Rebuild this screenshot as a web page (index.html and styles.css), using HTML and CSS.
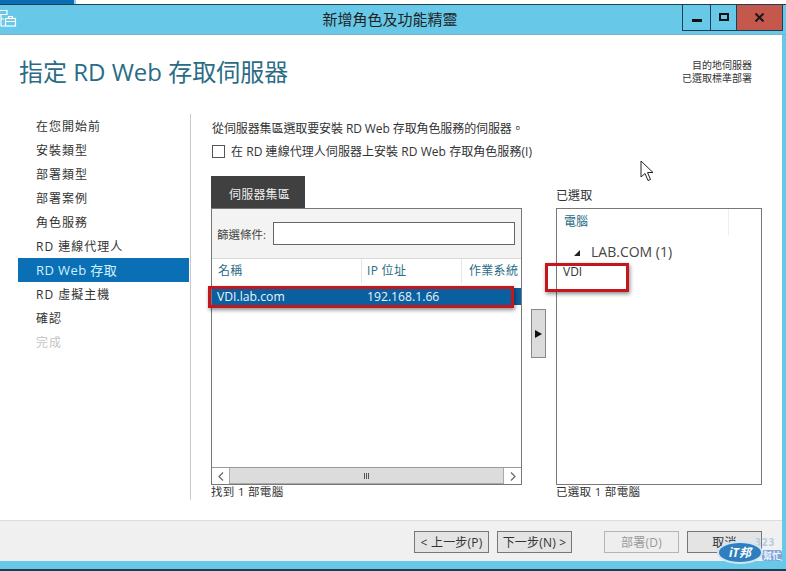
FILE: index.html
```html
<!DOCTYPE html>
<html lang="zh-Hant">
<head>
    <meta charset="UTF-8">
    <meta name="viewport" content="width=device-width, initial-scale=1.0">
    <title>新增角色及功能精靈</title>
    <link rel="stylesheet" href="styles.css">
</head>
<body>
    <div class="topstrip"><div class="taskbit"></div></div>

    <div class="titlebar">
        <svg class="appicon" width="17" height="17" viewBox="0 0 17 17" fill="none" stroke="#fff" stroke-width="1.2">
            <path d="M-1 0.500h8v4h-8M1 4.500v11.500h4M1 9h3"/>
            <rect x="5.500" y="8.500" width="10" height="7.500"/>
            <path d="M8.500 8.500v-2h4v2M5.500 11.500h10"/>
        </svg>
        <div class="wintitle">新增角色及功能精靈</div>
        <div class="winbtns">
            <div class="winbtn minbtn"><span class="minglyph"></span></div>
            <div class="winbtn maxbtn"><span class="maxglyph"></span></div>
            <div class="winbtn closebtn">
                <svg width="9" height="9" viewBox="0 0 9 9" stroke="#1a1a1a" stroke-width="2"><path d="M0.500 0.500l8 8M8.500 0.500l-8 8"/></svg>
            </div>
        </div>
    </div>

    <div class="dialog">
        <div class="head">
            <h1>指定 RD Web 存取伺服器</h1>
            <div class="dest">目的地伺服器<br>已選取標準部署</div>
        </div>

        <div class="main">
            <ul class="nav">
                <li>在您開始前</li>
                <li>安裝類型</li>
                <li>部署類型</li>
                <li>部署案例</li>
                <li>角色服務</li>
                <li>RD 連線代理人</li>
                <li class="active">RD Web 存取</li>
                <li>RD 虛擬主機</li>
                <li>確認</li>
                <li class="off">完成</li>
            </ul>

            <div class="content">
                <p class="intro">從伺服器集區選取要安裝 RD Web 存取角色服務的伺服器。</p>
                <label class="check"><span class="box"></span>在 RD 連線代理人伺服器上安裝 RD Web 存取角色服務(I)</label>

                <div class="columns">
                    <div class="pool">
                        <div class="tab">伺服器集區</div>
                        <div class="panel">
                            <div class="filter">
                                <span>篩選條件:</span>
                                <div class="input"></div>
                            </div>
                            <div class="cols">
                                <div class="col c1">名稱</div>
                                <div class="col c2">IP 位址</div>
                                <div class="col c3">作業系統</div>
                            </div>
                            <div class="row">
                                <span class="c1">VDI.lab.com</span>
                                <span class="c2">192.168.1.66</span>
                            </div>
                            <div class="spacer"></div>
                            <div class="scroll">
                                <div class="sbtn">
                                    <svg width="6" height="9" viewBox="0 0 6 9" fill="none" stroke="#666" stroke-width="1.200"><path d="M5 0.500l-4 4 4 4"/></svg>
                                </div>
                                <div class="thumb"><span></span><span></span><span></span></div>
                                <div class="sbtn">
                                    <svg width="6" height="9" viewBox="0 0 6 9" fill="none" stroke="#666" stroke-width="1.200"><path d="M1 0.500l4 4-4 4"/></svg>
                                </div>
                            </div>
                        </div>
                        <div class="note">找到 1 部電腦</div>
                    </div>

                    <div class="addbtn"><span class="arrow"></span></div>

                    <div class="picked">
                        <div class="picked-label">已選取</div>
                        <div class="panel picked-panel">
                            <div class="pc-col"><span>電腦</span></div>
                            <div class="group"><span class="tri"></span>LAB.COM (1)</div>
                            <div class="item">VDI</div>
                        </div>
                        <div class="note">已選取 1 部電腦</div>
                    </div>
                </div>
            </div>
        </div>

        <div class="foot">
            <button class="btn">&lt; 上一步(P)</button>
            <button class="btn next">下一步(N) &gt;</button>
            <button class="btn off deploy">部署(D)</button>
            <button class="btn">取消</button>
        </div>
    </div>
    <div class="bottomline"></div>

    <!-- 紅框標註、游標、浮水印 -->
    <div class="mark mark-row"></div>
    <div class="mark mark-vdi"></div>
    <svg class="cursor" width="14" height="22" viewBox="0 0 14 22">
        <path d="M1 1v16l4-3.500 3 7 2.500-1-3-7h5.500z" fill="#fff" stroke="#222" stroke-width="1"/>
    </svg>
    <div class="stamp">
        <div class="stamp-num">323</div>
        <div class="stamp-text">幫忙</div>
        <div class="stamp-logo">iT邦</div>
    </div>
</body>
</html>
```

FILE: styles.css
```css
* {
    box-sizing: border-box;
}

html, body {
    height: 100%;
}

body {
    margin: 0;
    width: 786px;
    height: 571px;
    overflow: hidden;
    position: relative;
    background-color: #67c8e8;
    color: #333;
    font-family: "Open Sans", "Noto Sans CJK TC", sans-serif;
    font-size: 12px;
}

.topstrip {
    height: 5px;
    background-color: #fff;
    border-bottom: 1px solid #1d3f55;
}

.taskbit {
    width: 76px;
    height: 4px;
    background-color: #0b6db3;
    border-right: 2px solid #a9cfe8;
}

.titlebar {
    height: 30px;
    display: flex;
    align-items: flex-start;
    border-bottom: 1px solid #7fb2c6;
    position: relative;
}

.appicon {
    margin-top: 5px;
}

.wintitle {
    position: absolute;
    left: 0;
    right: 0;
    top: 4px;
    padding-right: 6px;
    text-align: center;
    font-size: 15px;
    line-height: 20px;
    color: #222;
}

.winbtns {
    margin-left: auto;
    margin-right: 3px;
    display: flex;
    position: relative;
}

.winbtn {
    height: 26px;
    display: flex;
    align-items: center;
    justify-content: center;
    border: 1px solid #1d3f55;
    border-top: none;
}

.minbtn {
    width: 29px;
}

.maxbtn {
    width: 26px;
    border-left: none;
}

.closebtn {
    width: 46px;
    border-left: none;
    background-color: #c4584c;
}

.minglyph {
    width: 10px;
    height: 3px;
    margin-top: 5px;
    background-color: #111;
}

.maxglyph {
    width: 10px;
    height: 8px;
    margin-top: -1px;
    border: 2px solid #111;
}

.dialog {
    width: 782px;
    height: 526px;
    background-color: #fff;
    display: flex;
    flex-direction: column;
}

.head {
    height: 79px;
    padding: 21px 30px 0 19px;
    display: flex;
    justify-content: space-between;
}

h1 {
    margin: 0;
    font-size: 24px;
    font-weight: normal;
    line-height: 32px;
    color: #2a6c85;
}

.dest {
    font-size: 10px;
    line-height: 13px;
    text-align: right;
    margin-top: 3px;
    color: #333;
}

.main {
    flex: 1;
    display: flex;
    min-height: 0;
}

.nav {
    list-style: none;
    margin: 0;
    padding: 0 0 0 18px;
    width: 191px;
    height: 386px;
    border-right: 1px solid #c8c8c8;
}

.nav li {
    width: 171px;
    height: 24px;
    padding-left: 18px;
    line-height: 26px;
    letter-spacing: 1px;
}

.nav .active {
    background-color: #0a6fb5;
    color: #cff1fb;
    font-size: 13px;
    line-height: 24px;
    letter-spacing: 0.4px;
}

.nav .off {
    color: #c4c4c4;
}

.content {
    padding-left: 21px;
    flex: 1;
}

.intro {
    margin: 6px 0 0;
    line-height: 18px;
    letter-spacing: -0.1px;
}

.check {
    display: flex;
    align-items: center;
    height: 18px;
    margin-top: 4px;
    letter-spacing: 0.05px;
}

.box {
    width: 13px;
    height: 13px;
    margin-right: 6px;
    border: 1px solid #555;
    background-color: #fff;
}

.columns {
    display: flex;
    margin-top: 16px;
    margin-left: -1px;
}

.pool {
    width: 311px;
}

.tab {
    width: 94px;
    height: 32px;
    background-color: #404040;
    color: #eee;
    padding-left: 18px;
    line-height: 38px;
    letter-spacing: 0.2px;
}

.panel {
    height: 277px;
    border: 1px solid #777;
    background-color: #fff;
    display: flex;
    flex-direction: column;
}

.filter {
    height: 50px;
    background-color: #f3f3f3;
    display: flex;
    align-items: center;
    padding: 0 5px;
    font-size: 11.500px;
    color: #444;
    border-bottom: 1px solid #d8d8d8;
}

.input {
    width: 242px;
    height: 23px;
    margin-left: 7px;
    background-color: #fff;
    border: 1px solid #666;
}

.cols {
    height: 26px;
    display: flex;
    color: #2a6c85;
    line-height: 24px;
    letter-spacing: 0.3px;
}

.col {
    height: 24px;
    border-right: 1px solid #e6e6e6;
    overflow: hidden;
    white-space: nowrap;
}

.c1 {
    width: 150px;
    padding-left: 6px;
}

.c2 {
    width: 100px;
    padding-left: 5px;
}

.c3 {
    flex: 1;
    border-right: none;
    padding-left: 7px;
}

.row {
    height: 17px;
    margin-top: 3px;
    background-color: #0a5f9e;
    color: #e9f4fb;
    display: flex;
    font-size: 12.200px;
    line-height: 17px;
}

.row .c1 {
    padding-left: 5px;
}

.spacer {
    flex: 1;
}

.scroll {
    height: 17px;
    display: flex;
    border-top: 1px solid #999;
    background-color: #fff;
}

.sbtn {
    width: 17px;
    display: flex;
    align-items: center;
    justify-content: center;
}

.thumb {
    flex: 1;
    background-color: #dcdcdc;
    border: 1px solid #aaa;
    border-top: none;
    display: flex;
    align-items: center;
    justify-content: center;
    gap: 1px;
}

.thumb span {
    width: 1px;
    height: 6px;
    background-color: #555;
}

.note {
    margin-top: -1px;
    line-height: 15px;
    font-size: 11.500px;
    letter-spacing: 0.3px;
}

.addbtn {
    width: 15px;
    height: 49px;
    margin: 133px 10px 0 9px;
    background-color: #dcdcdc;
    border: 1px solid #888;
    display: flex;
    align-items: center;
    justify-content: center;
}

.arrow {
    border-left: 7px solid #111;
    border-top: 4px solid transparent;
    border-bottom: 4px solid transparent;
}

.picked {
    width: 206px;
}

.picked-label {
    height: 32px;
    line-height: 39px;
    letter-spacing: 0.1px;
}

.pc-col {
    height: 24px;
    color: #2a6c85;
    line-height: 26px;
    padding-left: 7px;
}

.pc-col span {
    display: block;
    width: 165px;
    border-right: 1px solid #eee;
}

.group {
    margin-top: 9px;
    padding-left: 17px;
    font-size: 14px;
    line-height: 20px;
    color: #444;
    display: flex;
    align-items: center;
}

.tri {
    width: 0;
    height: 0;
    margin-right: 11px;
    margin-top: 2px;
    border-left: 6px solid transparent;
    border-bottom: 6px solid #222;
}

.item {
    margin-top: 1px;
    padding-left: 6px;
    font-size: 12px;
    line-height: 17px;
}

.foot {
    height: 41px;
    margin-top: auto;
    background-color: #f0f0f0;
    border-top: 1px solid #dcdcdc;
    padding: 10px 20px 0 414px;
    display: flex;
    align-items: flex-start;
}

.btn {
    width: 75px;
    height: 22px;
    padding: 0;
    margin: 0;
    border: 1px solid #777;
    background-color: #e4e4e4;
    color: #333;
    font-family: inherit;
    font-size: 12px;
    letter-spacing: 0.2px;
    margin-left: 8px;
}

.btn:first-child {
    margin-left: 0;
}

.btn.deploy {
    margin-left: 32px;
}

.btn.off {
    color: #999;
    border-color: #b5b5b5;
    background-color: #eee;
}

.bottomline {
    position: absolute;
    left: 0;
    right: 0;
    bottom: 0;
    height: 2px;
    background-color: #1d3f55;
}

.mark {
    position: absolute;
    border: 3px solid #c4161c;
    box-shadow: 1px 2px 4px rgba(0, 0, 0, 0.45);
}

.mark-row {
    left: 208px;
    top: 286px;
    width: 306px;
    height: 22px;
}

.mark-vdi {
    left: 545px;
    top: 263px;
    width: 84px;
    height: 29px;
}

.cursor {
    position: absolute;
    left: 640px;
    top: 160px;
}

.stamp {
    position: absolute;
    left: 717px;
    top: 536px;
    width: 66px;
    height: 30px;
}

.stamp-logo {
    position: absolute;
    left: 0;
    top: 5px;
    width: 46px;
    height: 23px;
    border-radius: 50%;
    background-color: #2f7fc0;
    border: 2px solid #cfe6f5;
    color: #fff;
    font-size: 12px;
    font-weight: bold;
    font-style: italic;
    line-height: 19px;
    text-align: center;
}

.stamp-text {
    position: absolute;
    left: 45px;
    top: 14px;
    padding: 0 1px;
    border-radius: 3px;
    background-color: #7fa6d8;
    color: #eef4fb;
    font-size: 9px;
    font-weight: bold;
    line-height: 11px;
}

.stamp-num {
    position: absolute;
    left: 38px;
    top: 0;
    color: #b4cbe2;
    font-size: 10px;
    font-weight: bold;
    line-height: 12px;
    letter-spacing: 1px;
}
```
